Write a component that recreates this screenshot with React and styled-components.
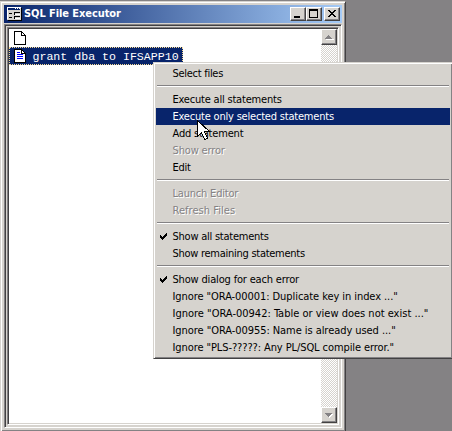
import React from "react";
import styled, { createGlobalStyle } from "styled-components";

const face = "#d6d3ce";
const shade = "#848284";
const dark = "#424142";
const navy = "#08246b";

const GlobalStyle = createGlobalStyle`
  * { box-sizing: border-box; }
  body { margin: 0; overflow: hidden; background: ${shade}; }
`;

const Desktop = styled.div`
  position: relative;
  width: 452px;
  height: 431px;
  padding-top: 1px;
  background: ${shade};
  overflow: hidden;
  font-family: "DejaVu Sans Condensed", "DejaVu Sans", sans-serif;
  font-stretch: condensed;
  font-size: 11px;
  cursor: default;
`;

const WindowFrame = styled.div`
  width: 346px;
  height: 431px;
  background: ${face};
  border: 1px solid;
  border-color: ${face} ${dark} ${dark} ${face};
  box-shadow: inset 1px 1px #fff, inset -1px -1px ${shade};
  padding: 3px;
  display: flex;
  flex-direction: column;
`;

const TitleBar = styled.div`
  height: 18px;
  flex: none;
  display: flex;
  align-items: center;
  padding: 0 2px;
  background: linear-gradient(90deg, #08246b, #a5cbf7);
`;

const TitleText = styled.span`
  flex: 1;
  padding-left: 2px;
  color: #fff;
  font-weight: bold;
  line-height: 18px;
  white-space: nowrap;
  letter-spacing: ${(p) => p.$track}px;
`;

const Raised = styled.div`
  flex: none;
  width: 16px;
  height: ${(p) => p.$height || 14}px;
  margin-left: ${(p) => p.$gap || 0}px;
  background: ${face};
  border: 1px solid;
  border-color: #fff ${dark} ${dark} #fff;
  box-shadow: inset -1px -1px ${shade};
  svg { display: block; }
`;

const Sunken = styled.div`
  height: 404px;
  flex: none;
  margin-top: 1px;
  border: 1px solid;
  border-color: ${shade} #fff #fff ${shade};
  box-shadow: inset 1px 1px ${dark};
  padding: 2px 2px 2px 1px;
  background: ${face};
`;

const ListFrame = styled.div`
  height: 398px;
  border: 1px solid;
  border-color: ${shade} #fff #fff ${shade};
  padding: 1px;
  box-shadow: inset 1px 1px ${dark}, inset -1px -1px ${face};
  display: flex;
  margin-left: 1px;
`;

const List = styled.div`
  flex: 1;
  background: #fff;
`;

const ListRow = styled.div`
  display: flex;
  align-items: center;
  width: 174px;
  height: 18px;
  padding-left: 4px;
  border: 1px ${(p) => (p.$selected ? "dotted #f7db94" : "solid transparent")};
  background: ${(p) => (p.$selected ? navy : "transparent")};
  color: #fff;
  svg { flex: none; }
`;

const Statement = styled.span`
  padding: 2px 0 0 6.5px;
  font: 11.6px/16px "Liberation Mono", "Courier New", monospace;
  white-space: pre;
`;

const ScrollBar = styled.div`
  width: 16px;
  flex: none;
  display: flex;
  flex-direction: column;
  justify-content: space-between;
  background: repeating-conic-gradient(${face} 0 25%, #fff 0 50%) 0 0 / 2px 2px;
`;

const Menu = styled.div`
  position: absolute;
  left: 153px;
  top: 62px;
  width: 300px;
  height: 297px;
  padding: 2px;
  background: ${face};
  border: 1px solid;
  border-color: ${face} ${dark} ${dark} ${face};
  box-shadow: inset 1px 1px #fff, inset -1px -1px ${shade};
`;

const MenuItem = styled.div`
  display: flex;
  height: 17px;
  line-height: 18px;
  white-space: nowrap;
  letter-spacing: ${(p) => p.$track || 0}px;
  color: ${(p) => (p.$active ? "#fff" : p.$disabled ? shade : "#000")};
  background: ${(p) => (p.$active ? navy : "transparent")};
  text-shadow: ${(p) => (p.$disabled ? "1px 1px #fff" : "none")};
`;

const CheckSlot = styled.span`
  width: 16.5px;
  flex: none;
  padding: 5px 0 0 4px;
  svg { display: block; }
`;

const Separator = styled.div`
  height: 2px;
  margin: 3px 1px 4px;
  border-top: 1px solid ${shade};
  border-bottom: 1px solid #fff;
`;

const Pointer = styled.svg`
  position: absolute;
  left: 197px;
  top: 120px;
`;

const FormIcon = () => (
  <svg width="16" height="16" viewBox="0 0 16 16" shapeRendering="crispEdges">
    <path fill="#d6d3ce" d="M1 2h14v12H1z" />
    <path fill="#fff" d="M1 1h14v1H2v11H1z" />
    <path fill="#000" d="M15 2h1v13H2v-1h13z" />
    <path fill="#08246b" d="M2 2h12v2H2z" />
    <path fill="#fff" d="M9 2h1v1H9zM11 2h1v1h-1zM13 2h1v1h-1z" />
    <path fill="#000" d="M3 7h3v1H3zM3 11h3v1H3zM8 6h6v1H9v2H8zM8 10h6v1H9v2H8z" />
    <path fill="#fff" d="M9 8h5v1H9zM9 12h5v1H9z" />
  </svg>
);

const PageIcon = ({ lines }) => (
  <svg width="12" height="14" viewBox="0 0 12 14" shapeRendering="crispEdges">
    <path d="M.5.5h7l4 4v9H.5z" fill="#fff" stroke="#000" />
    <path d="M7.5.5v4h4" fill="none" stroke="#000" />
    {lines && <path d="M3 3.5h3M3 5.5h6M3 7.5h6M3 9.5h6" stroke="#0000ff" />}
  </svg>
);

const Check = () => (
  <svg width="7" height="7" viewBox="0 0 7 7" shapeRendering="crispEdges">
    <path d="M0 2h1v1h1v1h1V3h1V2h1V1h1V0h1v3H6v1H5v1H4v1H3v1H2V6H1V5H0z" />
  </svg>
);

const entries = [
  { text: "Select files", track: -0.28 },
  null,
  { text: "Execute all statements", track: -0.2 },
  { text: "Execute only selected statements", active: true, track: -0.2 },
  { text: "Add statement", track: -0.18 },
  { text: "Show error", disabled: true, track: -0.15 },
  { text: "Edit", track: -0.3 },
  null,
  { text: "Launch Editor", disabled: true, track: -0.2 },
  { text: "Refresh Files", disabled: true, track: 0.04 },
  null,
  { text: "Show all statements", checked: true, track: -0.24 },
  { text: "Show remaining statements", track: -0.27 },
  null,
  { text: "Show dialog for each error", checked: true, track: -0.17 },
  { text: 'Ignore "ORA-00001: Duplicate key in index ..."', track: -0.07 },
  { text: 'Ignore "ORA-00942: Table or view does not exist ..."' },
  { text: 'Ignore "ORA-00955: Name is already used ..."', track: -0.06 },
  { text: 'Ignore "PLS-?????: Any PL/SQL compile error."', track: -0.09 },
];

export default function App() {
  return (
    <Desktop>
      <GlobalStyle />
      <WindowFrame>
        <TitleBar>
          <FormIcon />
          <TitleText $track={-0.08}>SQL File Executor</TitleText>
          <Raised>
            <svg width="14" height="12"><path d="M3 8h6v2H3z" /></svg>
          </Raised>
          <Raised>
            <svg width="14" height="12" shapeRendering="crispEdges">
              <path fillRule="evenodd" d="M2 1h9v9H2zM3 3v6h7V3z" />
            </svg>
          </Raised>
          <Raised $gap={2}>
            <svg width="14" height="12" shapeRendering="crispEdges">
              <path d="M3 2h2v1h1v1h2V3h1V2h2v1h-1v1H9v1H8v1h1v1h1v1h1v1H9V8H8V7H6v1H5v1H3V8h1V7h1V6h1V5H5V4H4V3H3z" />
            </svg>
          </Raised>
        </TitleBar>
        <Sunken>
          <ListFrame>
            <List>
              <ListRow><PageIcon /></ListRow>
              <ListRow $selected>
                <PageIcon lines />
                <Statement>grant dba to IFSAPP10</Statement>
              </ListRow>
            </List>
            <ScrollBar>
              <Raised $height={16}>
                <svg width="14" height="14" shapeRendering="crispEdges">
                  <path fill="#fff" d="M4 9h8v1H4z" />
                  <path fill={shade} d="M6 5h1v1h1v1h1v1h1v1H3V8h1V7h1V6h1z" />
                </svg>
              </Raised>
              <Raised $height={16}>
                <svg width="14" height="14" shapeRendering="crispEdges">
                  <path fill="#fff" d="M4 6h7v1h-1v1H9v1H8v1H7V9H6V8H5V7H4z" />
                  <path fill={shade} d="M3 5h7v1H9v1H8v1H7v1H6V8H5V7H4V6H3z" />
                </svg>
              </Raised>
            </ScrollBar>
          </ListFrame>
        </Sunken>
      </WindowFrame>
      <Menu>
        {entries.map((e, i) =>
          e ? (
            <MenuItem key={i} $active={e.active} $disabled={e.disabled} $track={e.track}>
              <CheckSlot>{e.checked && <Check />}</CheckSlot>
              {e.text}
            </MenuItem>
          ) : (
            <Separator key={i} />
          )
        )}
      </Menu>
      <Pointer width="13" height="21" viewBox="0 0 13 21" shapeRendering="crispEdges">
        <path d="M.5.5v16l4-4 3 7 3-1-3-7h5z" fill="#fff" stroke="#000" />
      </Pointer>
    </Desktop>
  );
}
